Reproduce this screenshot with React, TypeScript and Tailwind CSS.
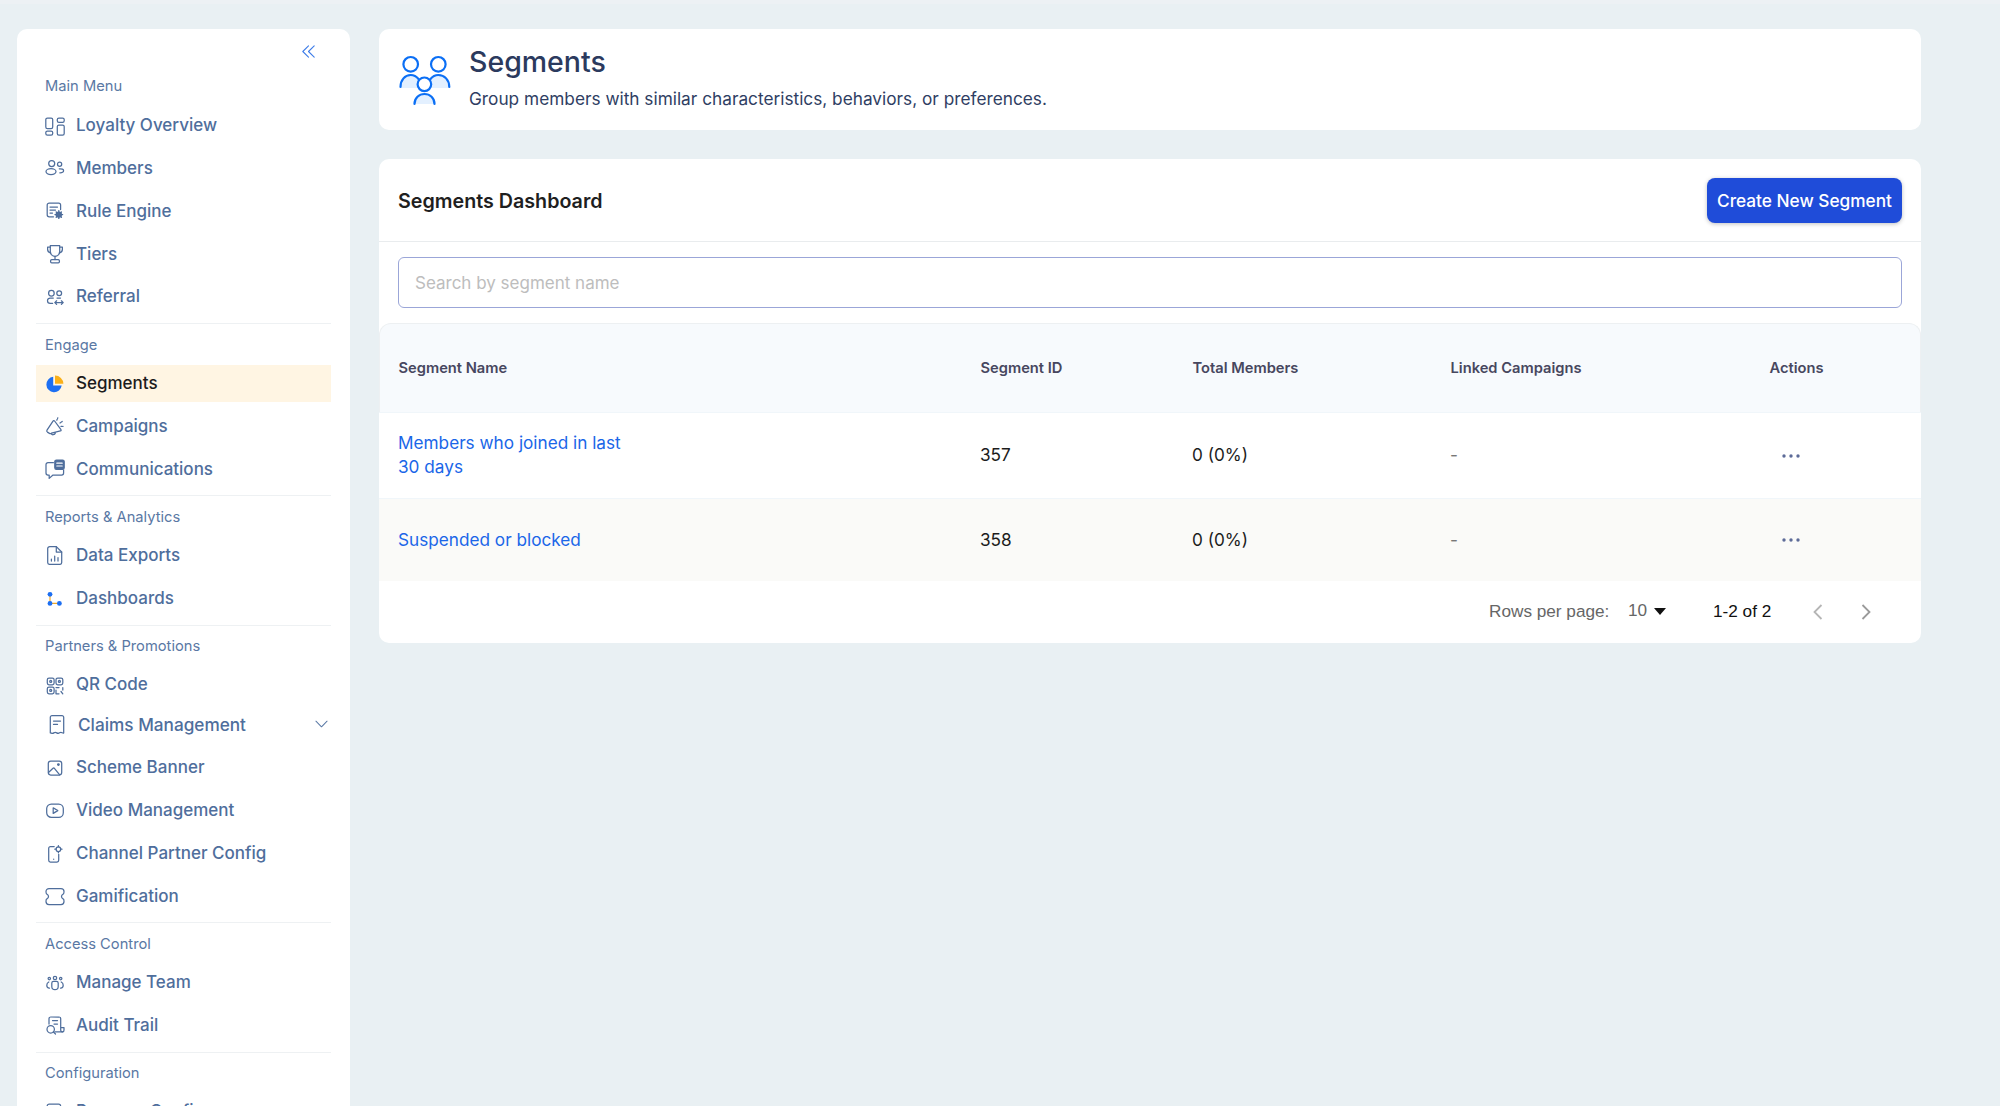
import React from "react";

type IconProps = { children: React.ReactNode };
const I = ({ children }: IconProps) => (
  <svg viewBox="0 0 20 20" fill="none" stroke="currentColor" strokeWidth={1.25} strokeLinecap="round" strokeLinejoin="round" className="w-[20px] h-[20px] shrink-0 -mt-[1px] text-[#4f6e9c]">
    {children}
  </svg>
);

const Loyalty = () => (
  <I>
    <rect x="0.8" y="2" width="6.9" height="10.5" rx="1.6" />
    <rect x="12.3" y="2" width="6.9" height="4.3" rx="1.6" />
    <rect x="0.8" y="15" width="6.9" height="4.2" rx="1.6" />
    <rect x="12.3" y="9" width="6.9" height="10.2" rx="1.6" />
  </I>
);
const Members = () => (
  <I>
    <circle cx="6.7" cy="5.5" r="3" />
    <circle cx="14.6" cy="6.3" r="2.1" />
    <ellipse cx="6" cy="13.6" rx="5" ry="2.9" />
    <path d="M14.3 10.8c2.6-.2 4.3.6 4.3 1.9 0 1.3-1.4 2.2-3.8 2.1" />
  </I>
);
const Rule = () => (
  <I>
    <path d="M8.5 15.8H4.2a2 2 0 0 1-2-2V4a2 2 0 0 1 2-2h9.4a2 2 0 0 1 2 2v4.5" />
    <path d="M5 6h7.5M5 9h5.5M5 12h2.5" />
    <circle cx="13.8" cy="13.6" r="2.6" fill="currentColor" />
    <path d="M13.8 9.8v1M13.8 16.4v1M10 13.6h1M16.6 13.6h1M11.2 11l.7.7M15.7 15.5l.7.7M16.4 11l-.7.7M11.9 15.5l-.7.7" strokeWidth={1.4} />
  </I>
);
const Tiers = () => (
  <I>
    <path d="M5.3 1.6h9.4v6a4.7 4.7 0 0 1-9.4 0z" />
    <path d="M5.3 3H2.6v2.3c0 2.2 1.3 3.4 3.2 3.8M14.7 3h2.7v2.3c0 2.2-1.3 3.4-3.2 3.8" />
    <path d="M10 12.4v3.2" />
    <rect x="5.6" y="15.6" width="8.8" height="3.2" rx="1.1" />
  </I>
);
const Referral = () => (
  <I>
    <circle cx="6.4" cy="6.2" r="2.8" />
    <circle cx="14.2" cy="6.2" r="2.4" />
    <path d="M8.3 11H5.2a2.7 2.7 0 0 0 0 5.4h2.4" />
    <path d="M12 11h3.5M9.8 15.6h8.4M11.6 13.8l-1.8 1.8 1.8 1.8M16.4 13.8l1.8 1.8-1.8 1.8" />
  </I>
);
const Segments = () => (
  <svg viewBox="0 0 20 20" className="w-[20px] h-[20px] shrink-0">
    <path d="M8.2 2.8A7.7 7.7 0 1 0 16.7 11.5H8.2Z" fill="#1d6ff2" />
    <path d="M10 1.6A8.3 8.3 0 0 1 18.4 9.8H10Z" fill="#fbb017" />
  </svg>
);
const Campaigns = () => (
  <I>
    <path d="M8 5.2 2 14.2c-.5.8-.2 1.5.4 1.9l2.1 1.3c.7.4 1.3.3 1.9-.2l9-2.3c.8-.2 1-.9.4-1.5L9.6 5c-.5-.4-1.2-.4-1.6.2Z" />
    <path d="M6.2 17.6c.7 1.6 3.4 1.7 4.3-.8" />
    <path d="M11.8 4.2l1-2.4M15 7l2.2-1.6M16 10.4h2" strokeDasharray="1 .9" />
  </I>
);
const Communications = () => (
  <I>
    <path d="M8.4 3.7H3a2 2 0 0 0-2 2V14a2 2 0 0 0 2 2h1.2v3.4L8 16h8.6a2 2 0 0 0 2-2v-3" />
    <rect x="9.8" y="1" width="9.4" height="9.4" rx="1.6" fill="currentColor" />
    <path d="M11.8 4.2h5.4M11.8 7h5.4" stroke="#fff" strokeWidth={1.2} />
  </I>
);
const DataExports = () => (
  <I>
    <path d="M11.3 1.6H4.7a2 2 0 0 0-2 2v13.8a2 2 0 0 0 2 2h10a2 2 0 0 0 2-2V7Z" />
    <path d="M11.3 1.6V7h5.4" />
    <path d="M6.4 16v-2M9.7 16v-5M13 16v-3.5" />
  </I>
);
const Dashboards = () => (
  <svg viewBox="0 0 20 20" className="w-[20px] h-[20px] shrink-0">
    <path d="M5 5.5V14.4H14.4" stroke="#f0a92c" strokeWidth={1.2} fill="none" />
    <circle cx="5" cy="5.3" r="2.4" fill="#1d6ff2" />
    <circle cx="5" cy="14.4" r="2.4" fill="#1d6ff2" />
    <circle cx="14.4" cy="14.4" r="2.4" fill="#1d6ff2" />
  </svg>
);
const QR = () => (
  <I>
    <rect x="2.3" y="3" width="6.8" height="6.8" rx="1.7" />
    <rect x="11" y="3" width="6.8" height="6.8" rx="1.7" />
    <rect x="2.3" y="12" width="6.8" height="6.8" rx="1.7" />
    <circle cx="5.7" cy="6.4" r="1" />
    <circle cx="14.4" cy="6.4" r="1" />
    <circle cx="5.7" cy="15.4" r="1" />
    <path d="M11 12.5h3M17.8 12.5v2.5M11 15v3.8h3M16 16.5l1.8 2.3" />
  </I>
);
const Claims = () => (
  <I>
    <path d="M3.3 3.7a1.7 1.7 0 0 1 1.7-1.7h10a1.7 1.7 0 0 1 1.7 1.7v15.8c-1 .4-1.7-.8-2.8-.8s-1.7 1.1-2.8 1.1-1.6-1.1-2.8-1.1-1.8 1.1-2.8 1.1-1.5-.9-2.2-.4Z" transform="translate(0 -.4)" />
    <path d="M6.5 7h7M6.5 10.4h4" />
  </I>
);
const Banner = () => (
  <I>
    <rect x="3.3" y="4" width="13.4" height="14" rx="2.4" />
    <path d="M3.5 15.5 8 11.3c.5-.4 1-.4 1.4 0l5.3 6.5" />
    <circle cx="13.4" cy="7.6" r=".8" fill="currentColor" />
  </I>
);
const Video = () => (
  <I>
    <rect x="1.7" y="4" width="16.6" height="13.3" rx="4.6" />
    <path d="M8.2 7.8 12.8 10.6 8.2 13.4Z" />
  </I>
);
const Channel = () => (
  <I>
    <path d="M9.2 3.6H5.4a1.7 1.7 0 0 0-1.7 1.7v12a1.7 1.7 0 0 0 1.7 1.7h6.6a1.7 1.7 0 0 0 1.7-1.7v-6" />
    <circle cx="13.4" cy="6.2" r="2.3" />
    <path d="M13.4 2.6v1.2M13.4 8.6v1.2M9.8 6.2H11M15.8 6.2H17" />
    <path d="M8.7 16.2v.1" />
  </I>
);
const Gamification = () => (
  <I>
    <path d="M4 2.5h12a3 3 0 0 1 3 3c0 1.2-.1 2-.6 2.4-.7.6-1.9.9-1.9 2.6s1.2 2 1.9 2.6c.5.4.6 1.2.6 2.4a3 3 0 0 1-3 3H4a3 3 0 0 1-3-3c0-1.2.1-2 .6-2.4.7-.6 1.9-.9 1.9-2.6s-1.2-2-1.9-2.6C1.1 7.5 1 6.7 1 5.5a3 3 0 0 1 3-3Z" />
  </I>
);
const Team = () => (
  <I>
    <circle cx="10" cy="6" r="1.7" />
    <circle cx="4.3" cy="6.6" r="1.2" />
    <circle cx="15.7" cy="6.6" r="1.2" />
    <path d="M6.8 11a1.7 1.7 0 0 1 1.7-1.6h3a1.7 1.7 0 0 1 1.7 1.6v3.5a3.2 3.2 0 0 1-6.4 0Z" />
    <path d="M3.8 10c-1.3.6-2 1.4-2 3.2 0 1.6.8 2.8 2.6 3M16.2 10c1.3.6 2 1.4 2 3.2 0 1.6-.8 2.8-2.6 3" />
  </I>
);
const Audit = () => (
  <I>
    <path d="M4 9V3.6A1.7 1.7 0 0 1 5.7 2h8.3a1.7 1.7 0 0 1 1.7 1.6v11.4c0 1 .8 1.9 1.9 1.9s1.4-.8 1.4-1.9V12.5h-3.3" />
    <path d="M7.5 5.6h5M9 9h3.5M17.6 16.9H9.8" />
    <circle cx="5.7" cy="14.3" r="3.7" />
    <path d="M8.4 17l2.1 2" />
  </I>
);

type Item = { label: string; icon: React.ReactNode; active?: boolean };
type Section = { title: string; items: Item[] };

const sections: Section[] = [
  {
    title: "Main Menu",
    items: [
      { label: "Loyalty Overview", icon: <Loyalty /> },
      { label: "Members", icon: <Members /> },
      { label: "Rule Engine", icon: <Rule /> },
      { label: "Tiers", icon: <Tiers /> },
      { label: "Referral", icon: <Referral /> },
    ],
  },
  {
    title: "Engage",
    items: [
      { label: "Segments", icon: <Segments />, active: true },
      { label: "Campaigns", icon: <Campaigns /> },
      { label: "Communications", icon: <Communications /> },
    ],
  },
  {
    title: "Reports & Analytics",
    items: [
      { label: "Data Exports", icon: <DataExports /> },
      { label: "Dashboards", icon: <Dashboards /> },
    ],
  },
  {
    title: "Partners & Promotions",
    items: [
      { label: "QR Code", icon: <QR /> },
      { label: "Claims Management", icon: <Claims /> },
      { label: "Scheme Banner", icon: <Banner /> },
      { label: "Video Management", icon: <Video /> },
      { label: "Channel Partner Config", icon: <Channel /> },
      { label: "Gamification", icon: <Gamification /> },
    ],
  },
  {
    title: "Access Control",
    items: [
      { label: "Manage Team", icon: <Team /> },
      { label: "Audit Trail", icon: <Audit /> },
    ],
  },
];

const NavRow = ({ item }: { item: Item }) => {
  if (item.label === "Claims Management") {
    return (
      <div className="h-[37px] -mt-[3px] mb-[6px] pl-[11px] flex items-center gap-[11px] text-[17.2px] font-medium text-[#4f6e9c]">
        {item.icon}
        <span className="flex-1">{item.label}</span>
        <svg viewBox="0 0 14 8" className="w-[13px] h-[8px] mr-[3px] -mt-[2px]" fill="none" stroke="#5b7aa6" strokeWidth={1.1} strokeLinecap="round" strokeLinejoin="round">
          <path d="M1 1l6 6 6-6" />
        </svg>
      </div>
    );
  }
  return (
    <div
      className={
        item.active
          ? "h-[37px] mb-[5.8px] pl-[9px] flex items-center gap-[11px] text-[17px] font-medium bg-[#fff5e3] text-[#1c1c1c]"
          : "h-[37px] mb-[5.8px] pl-[9px] flex items-center gap-[11px] text-[17px] font-medium text-[#4f6e9c]"
      }
    >
      {item.icon}
      <span>{item.label}</span>
    </div>
  );
};

const Divider = () => <div className="h-px bg-[#eef1f3] mt-[7.5px] mb-[11.5px]" />;
const Label = ({ children, first }: { children: React.ReactNode; first?: boolean }) => (
  <div className={first ? "h-[18px] mb-[12.5px] pl-[9px] text-[14.7px] leading-[18px] text-[#5a78a4]" : "h-[18px] mb-[11.5px] pl-[9px] text-[14.7px] leading-[18px] text-[#5a78a4]"}>{children}</div>
);

const Sidebar = () => (
  <aside className="w-[333px] shrink-0 bg-white rounded-t-[10px] overflow-hidden">
    <div className="h-[48px] pt-[16px] pr-[35px] flex justify-end items-start">
      <svg viewBox="0 0 13 13" className="w-[13px] h-[13px]" fill="none" stroke="#3f7de8" strokeWidth={1.1} strokeLinecap="round" strokeLinejoin="round">
        <path d="M6.5 .8.8 6.5l5.7 5.7M12.2 .8 6.5 6.500l5.700 5.700" />
      </svg>
    </div>
    <div className="px-[19px]">
      {sections.map((s, i) => (
        <div key={s.title}>
          {i > 0 && <Divider />}
          <Label first={i === 0}>{s.title}</Label>
          {s.items.map((it) => (
            <NavRow key={it.label} item={it} />
          ))}
        </div>
      ))}
      <Divider />
      <Label>Configuration</Label>
      <div className="h-[37px] pl-[9px] flex items-center gap-[11px] text-[17px] font-medium text-[#4f6e9c]">
        <Rule />
        <span>Program Config</span>
      </div>
    </div>
  </aside>
);

const PeopleIcon = () => (
  <svg viewBox="15 12 60 54" className="w-[60px] h-[54px] shrink-0" fill="none" stroke="#0b6ff5" strokeWidth={2.2} strokeLinecap="round">
    <path d="M20.5 47C20.5 39 25 34 30.7 34C34 34 36.5 35.5 38.5 38L38 47Z" fill="#e3f0ff" stroke="none" />
    <path d="M69.3 47C69.3 39 64.5 34 58.3 34C55 34 52.5 35.5 50.5 38L51 47Z" fill="#e3f0ff" stroke="none" />
    <path d="M34.5 63C34.5 57 39 53 44.5 53C50 53 54.5 57 54.5 63Z" fill="#e3f0ff" stroke="none" />
    <circle cx="30.7" cy="23.3" r="7.3" />
    <circle cx="58.3" cy="23.3" r="7.3" />
    <path d="M20.5 46C20.5 39 25 34 30.7 34C34 34 36.5 35.5 38.5 38" />
    <path d="M69.3 46C69.3 39 64.5 34 58.3 34C55 34 52.5 35.5 50.5 38" />
    <circle cx="44.4" cy="43.3" r="6.8" />
    <path d="M34.5 63C34.5 57 39 53 44.5 53C50 53 54.5 57 54.5 63" />
  </svg>
);

const Dots = () => (
  <svg viewBox="0 0 18 4" className="w-[18px] h-[4px] ml-[13px]" fill="#5d6b98">
    <circle cx="2" cy="2" r="1.7" />
    <circle cx="9" cy="2" r="1.7" />
    <circle cx="16" cy="2" r="1.7" />
  </svg>
);

const rows = [
  { name: "Members who joined in last 30 days", id: "357", total: "0 (0%)", cls: "h-[86px] bg-white" },
  { name: "Suspended or blocked", id: "358", total: "0 (0%)", cls: "h-[83px] bg-[#fafaf8]" },
];

export default function App() {
  return (
    <div className="h-[1106px] overflow-hidden bg-[#e9f0f3] font-['Inter',sans-serif]">
      <div className="h-[4px] bg-[#edf1f4]" />
      <div className="flex h-[1102px] pl-[17px] pt-[25px] gap-[29px]">
        <Sidebar />
        <main className="w-[1542px] shrink-0 flex flex-col gap-[29px]">
          <section className="h-[101px] bg-white rounded-[10px] pl-[16px] flex items-center gap-[14px]">
            <PeopleIcon />
            <div className="-mt-[4px]">
              <h1 className="text-[28.5px] leading-[36px] font-medium text-[#2b3a5e]">Segments</h1>
              <p className="mt-[7px] text-[17.25px] leading-[24px] text-[#2f3e63]">Group members with similar characteristics, behaviors, or preferences.</p>
            </div>
          </section>
          <section className="h-[484px] bg-white rounded-[10px] flex flex-col">
            <div className="h-[83px] shrink-0 px-[19px] flex items-center justify-between border-b border-[#e9ecee]">
              <h2 className="mt-[3px] text-[19.7px] font-semibold text-[#1f1f1f]">Segments Dashboard</h2>
              <button className="w-[195px] h-[45px] pt-[1px] rounded-[8px] bg-[#1f4cd9] text-white text-[17.25px] font-medium shadow-[0_1px_4px_rgba(0,0,0,0.25)]">Create New Segment</button>
            </div>
            <div className="px-[19px] py-[15px] shrink-0">
              <input
                placeholder="Search by segment name"
                className="w-full h-[51px] rounded-[6px] border border-[#9ba6d8] bg-white pl-[16px] pt-[1px] text-[17px] placeholder:text-[#bdbdbd] outline-none"
              />
            </div>
            <div className="h-[89px] shrink-0 rounded-t-[12px] border-t border-x border-[#edf0f2] bg-[#f7fafd] pl-[18.5px] grid grid-cols-[582px_212px_258px_319px_1fr] items-center text-[14.7px] font-semibold text-[#47475f]">
              <div>Segment Name</div>
              <div>Segment ID</div>
              <div>Total Members</div>
              <div>Linked Campaigns</div>
              <div>Actions</div>
            </div>
            {rows.map((r) => (
              <div key={r.id} className={`${r.cls} shrink-0 pl-[19px] grid grid-cols-[582px_212px_258px_319px_1fr] items-center text-[17.2px] text-[#1c1c1c] border-t border-[#f0f6fa]`}>
                <div className="w-[235px] -mt-[1px] text-[#1a66e8] leading-[24px]">{r.name}</div>
                <div className="-mt-[1px]">{r.id}</div>
                <div className="-mt-[1px]">{r.total}</div>
                <div className="-mt-[1px] text-[#777]">-</div>
                <div>
                  <Dots />
                </div>
              </div>
            ))}
            <div className="flex-1 flex items-center font-['Liberation_Sans',sans-serif] pl-[1110px] pb-[1px]">
              <span className="w-[139px] text-[17.2px] text-[#666]">Rows per page:</span>
              <span className="w-[26px] text-[17.2px] text-[#666] -mt-[2px]">10</span>
              <svg viewBox="0 0 12 7" className="w-[12px] h-[7px]" fill="#111">
                <path d="M0 0h12L6 7Z" />
              </svg>
              <span className="ml-[47px] w-[100px] text-[17.2px] text-[#111]">1-2 of 2</span>
              <svg viewBox="0 0 10 16" className="w-[10px] h-[16px]" fill="none" stroke="#b5b5b5" strokeWidth={1.8}>
                <path d="M8.5 1 1.5 8l7 7" />
              </svg>
              <svg viewBox="0 0 10 16" className="ml-[38px] w-[10px] h-[16px]" fill="none" stroke="#9a9a9a" strokeWidth={1.8}>
                <path d="M1.5 1l7 7-7 7" />
              </svg>
            </div>
          </section>
        </main>
      </div>
    </div>
  );
}
